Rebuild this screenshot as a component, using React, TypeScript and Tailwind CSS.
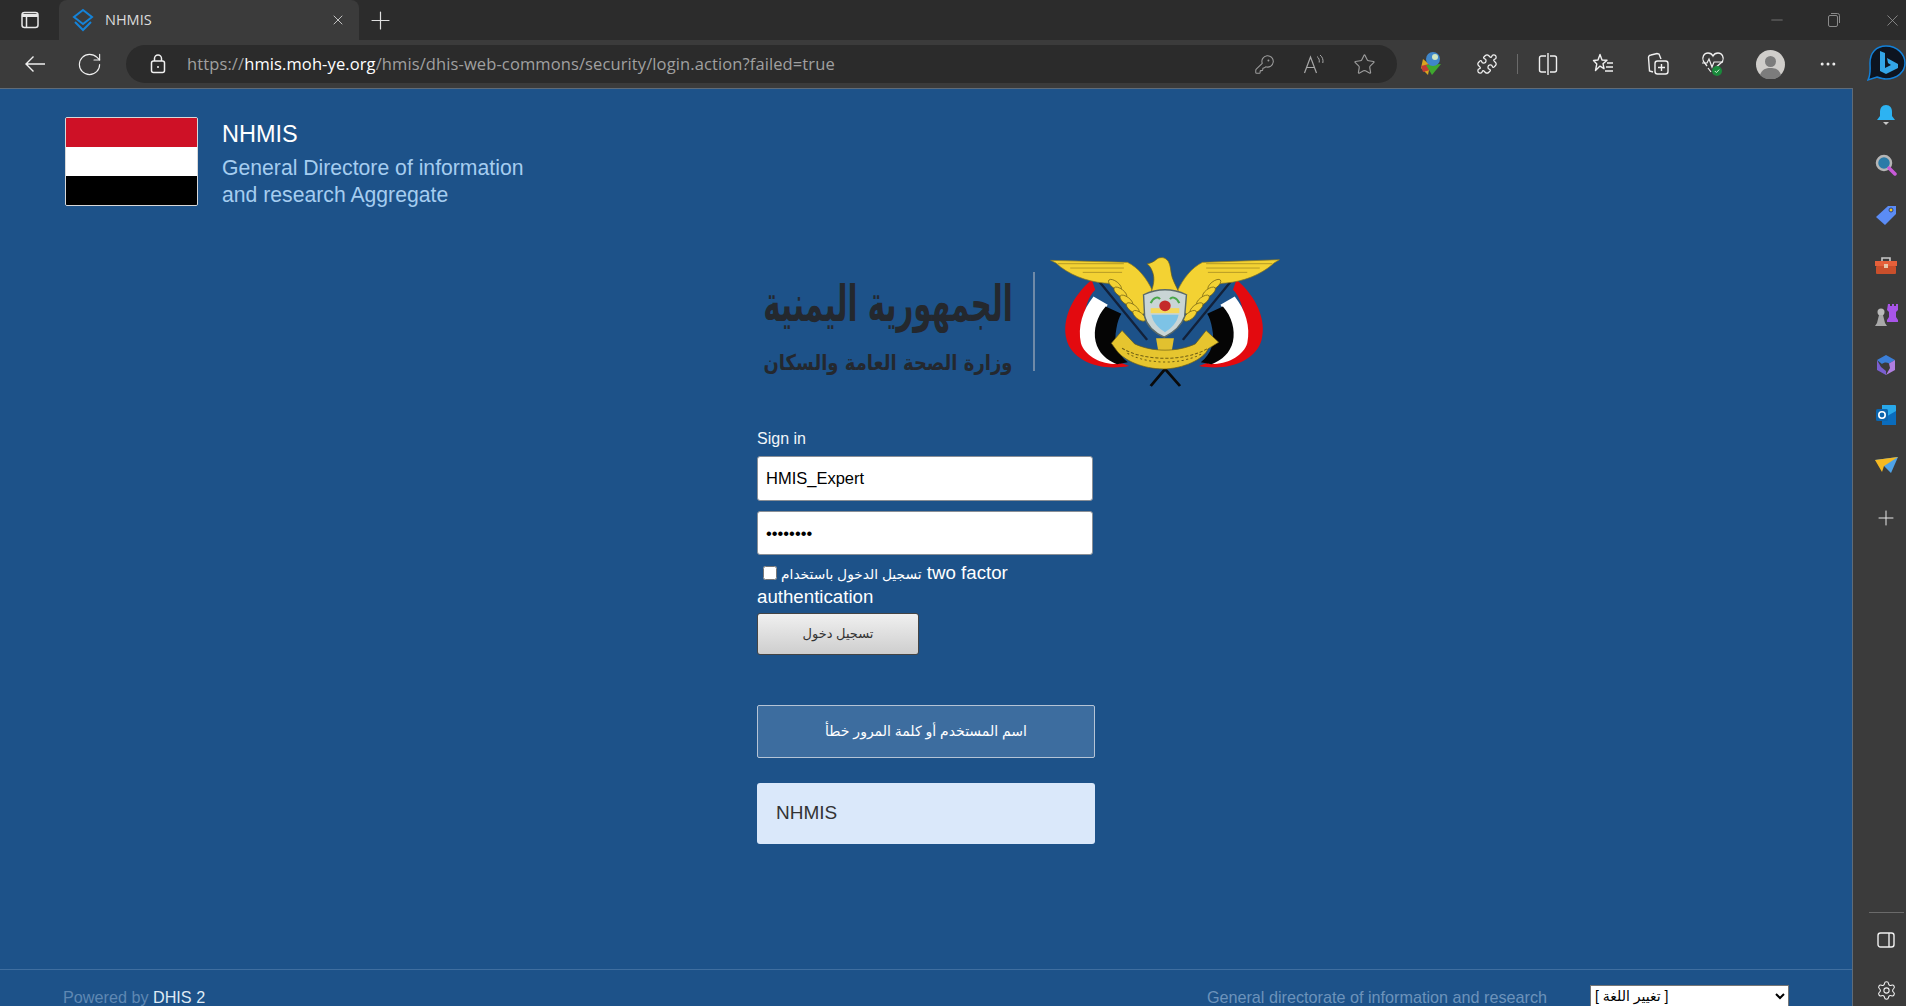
import React from 'react';
import { RotateCw, KeyRound, Star, Puzzle, Plus, X, Minus, Settings, MoreHorizontal } from 'lucide-react';

const arial = "font-['Liberation_Sans','DejaVu_Sans',sans-serif]";

function TabDiamonds() {
  return (
    <svg width="22" height="24" viewBox="0 0 22 24" fill="none" stroke="#1583d8" strokeWidth="2">
      <path d="M11 2 20 9 11 16 2 9Z" />
      <path d="M3 14 11 22 19 14" />
    </svg>
  );
}

function ToolbarBtn({ children, wide }: { children: React.ReactNode; wide?: boolean }) {
  return <div className={`flex h-full items-center justify-center ${wide ? 'w-[56px]' : 'w-[55px]'}`}>{children}</div>;
}

function TabStrip() {
  return (
    <div className="flex h-[40px] items-end bg-[#2c2c2c] text-[#d8d8d8]">
      <div className="flex h-full w-[59px] items-center justify-center">
        <svg width="20" height="20" viewBox="0 0 20 20" fill="none" stroke="#e8e8e8" strokeWidth="1.5">
          <rect x="2" y="2.5" width="16" height="15" rx="2.5" />
          <path d="M2 5.500h16" strokeWidth="3" />
          <path d="M6.500 6v11" />
        </svg>
      </div>
      <div className="flex h-full w-[300px] items-center rounded-t-lg bg-[#3b3b3b] pl-[13px] pr-[13px]">
        <TabDiamonds />
        <span className="ml-[11px] font-['Open_Sans',sans-serif] text-[14.5px] text-[#dcdcdc]">NHMIS</span>
        <X className="ml-auto" size={16} strokeWidth={1.3} />
      </div>
      <div className="flex h-full w-[42px] items-center justify-center">
        <Plus size={29} strokeWidth={1} color="#e0e0e0" />
      </div>
      <div className="ml-auto flex h-full">
        <div className="flex w-[57px] items-center justify-center"><Minus size={18} strokeWidth={1} color="#8a8a8a" /></div>
        <div className="flex w-[57px] items-center justify-center">
          <svg width="14" height="16" viewBox="0 0 14 16" fill="none" stroke="#8a8a8a">
            <rect x="1.500" y="3.500" width="9" height="11" rx="1.500" />
            <path d="M4 1.500h6.500a2 2 0 0 1 2 2V11" />
          </svg>
        </div>
        <div className="flex w-[44px] items-center pl-[21px]"><X size={19} strokeWidth={1} color="#9a9a9a" /></div>
      </div>
    </div>
  );
}

function AddressBar() {
  return (
    <div className="ml-[9px] flex h-[38px] w-[1271px] items-center rounded-full bg-[#2b2b2b] pl-[24px] pr-[8px]">
      <svg width="16" height="20" viewBox="0 0 16 20" fill="none" stroke="#f0f0f0" strokeWidth="1.500">
        <rect x="1.500" y="7" width="13" height="11.500" rx="2" />
        <path d="M4.500 7V4.500a3.500 3.500 0 0 1 7 0V7" />
        <circle cx="8" cy="13" r="1" fill="#f0f0f0" stroke="none" />
      </svg>
      <div className="ml-[21px] font-['Open_Sans',sans-serif] text-[16.5px] tracking-[0.11px] text-[#a0a0a0] whitespace-nowrap">
        https://<span className="text-white">hmis.moh-ye.org</span>/hmis/dhis-web-commons/security/login.action?failed=true
      </div>
      <div className="ml-auto flex h-full text-[#9c9c9c]">
        <div className="flex w-[50px] items-center justify-center"><KeyRound size={21} strokeWidth={1.2} /></div>
        <div className="flex w-[50px] items-center justify-center">
          <svg width="22" height="20" viewBox="0 0 22 20" fill="none" stroke="#a8a8a8" strokeWidth="1.2">
            <path d="M1.500 19 7.500 3l6 16M3.800 13.500h7.400" />
            <path d="M14 2.500c2 1.500 2.600 3.500 2.200 6M17 1c2.600 2 3.500 5 2.800 8" strokeWidth="1" />
          </svg>
        </div>
        <div className="flex w-[50px] items-center justify-center"><Star size={23} strokeWidth={1.2} /></div>
      </div>
    </div>
  );
}

function Toolbar() {
  return (
    <div className="flex h-[48px] items-center bg-[#3b3b3b] pl-[7px] text-[#f0f0f0]">
      <ToolbarBtn>
        <svg width="22" height="18" viewBox="0 0 22 18" fill="none" stroke="#f0f0f0" strokeWidth="1.400">
          <path d="M21 9H2M9.500 1.500 2 9l7.500 7.500" />
        </svg>
      </ToolbarBtn>
      <ToolbarBtn><RotateCw size={27} strokeWidth={1} /></ToolbarBtn>
      <AddressBar />
      <div className="ml-[6px] flex h-full items-center">
        <ToolbarBtn wide>
          <svg width="22" height="26" viewBox="0 0 22 26">
            <path d="M3 8 10 14 8 24 1 17Z" fill="#d9a520" />
            <path d="M1 15 9 13 10 19 3 21Z" fill="#c23b32" />
            <path d="M6 14 21 13 12 24Z" fill="#3fa82f" />
            <circle cx="13" cy="8" r="7" fill="#3f86c9" />
            <circle cx="15" cy="6" r="3" fill="#cfe6c3" />
          </svg>
        </ToolbarBtn>
        <ToolbarBtn wide><Puzzle size={22} strokeWidth={1.4} /></ToolbarBtn>
        <div className="mx-[2px] h-[20px] w-px bg-[#6a6a6a]" />
        <ToolbarBtn>
          <svg width="20" height="22" viewBox="0 0 20 22" fill="none" stroke="#f0f0f0" strokeWidth="1.400">
            <path d="M8 3H3.500A2 2 0 0 0 1.500 5v12a2 2 0 0 0 2 2H8M12 3h4.500a2 2 0 0 1 2 2v12a2 2 0 0 1-2 2H12M10 0v22" />
          </svg>
        </ToolbarBtn>
        <ToolbarBtn>
          <svg width="22" height="22" viewBox="0 0 22 22" fill="none" stroke="#f0f0f0" strokeWidth="1.400">
            <path d="M8 1.500 10 7l5 .3-4 3.400 1 5-4-2.600-4.500 4.400 1.300-6.600L1.500 7.500 6 7Z" strokeLinejoin="round" />
            <path d="M15 10h6M14 14h7M13 18h8" />
          </svg>
        </ToolbarBtn>
        <ToolbarBtn>
          <svg width="22" height="24" viewBox="0 0 22 24" fill="none" stroke="#f0f0f0" strokeWidth="1.400">
            <rect x="8" y="9" width="13" height="13" rx="2.500" />
            <path d="M14.500 12v7M11 15.500h7" />
            <path d="M6 20 2.500 19 1.500 5.500A2.500 2.500 0 0 1 4 3l6-1.500 2 .5 2 5" />
          </svg>
        </ToolbarBtn>
        <ToolbarBtn>
          <svg width="24" height="26" viewBox="0 0 24 26" fill="none">
            <path d="M6 15 2.500 10.500C.5 6 3 2 7 2c2.500 0 4 1 5 3 1-2 2.500-3 5-3 4 0 6.500 4 4.500 8.500L13 18" stroke="#f0f0f0" strokeWidth="1.300" />
            <path d="M1 12h5l2-4 3 8 2-5h9" stroke="#f0f0f0" strokeWidth="1.200" />
            <path d="M7 17l3 4" stroke="#f0f0f0" strokeWidth="1.200" />
            <circle cx="16" cy="20" r="5" fill="#1a8a3c" />
            <path d="M13.800 20l1.600 1.600 2.800-3" stroke="#cdeed4" strokeWidth="1" />
          </svg>
        </ToolbarBtn>
        <div className="ml-[3px] h-full">
          <ToolbarBtn>
            <svg width="29" height="29" viewBox="0 0 29 29">
              <circle cx="14.500" cy="14.500" r="14.500" fill="#cfcdca" />
              <circle cx="14.500" cy="11.500" r="5.500" fill="#7c7c7c" />
              <path d="M4 25c2-6 6-7 10.500-7S23 19 25 25a14.500 14.500 0 0 1-21 0Z" fill="#7c7c7c" />
            </svg>
          </ToolbarBtn>
        </div>
        <div className="ml-[2px] h-full">
          <ToolbarBtn><MoreHorizontal size={20} strokeWidth={1.6} /></ToolbarBtn>
        </div>
      </div>
      <div className="ml-auto flex items-center">
        <svg width="39" height="38" viewBox="0 0 39 38">
          <path d="M19 1C9 1 3 8 3 18c0 6 1 11-2 17l9-3c3 1 6 2 9 2 11 0 19-7 19-16S30 1 19 1Z" fill="#0d1420" stroke="#1380d8" strokeWidth="1.500" />
          <path d="M13 6l5 2v15l6-3-3-2-1-5 11 6v4l-12 6-6-3Z" fill="#33a6e8" />
        </svg>
      </div>
    </div>
  );
}

function Emblem() {
  const feathers = [
    [1050, 135], [1065, 158], [1082, 182], [1100, 205], [1118, 228],
    [1328, 135], [1313, 158], [1296, 182], [1278, 205], [1260, 228],
  ];
  return (
    <svg className="h-[137px] w-[236px] shrink-0" viewBox="860 40 660 410" preserveAspectRatio="none">
      <path d="M985 120C930 170 900 240 915 300c15 60 90 95 175 78l-20-8c-50-5-100-40-105-110-3-50 10-90 30-110Z" fill="#e30a0f" />
      <path d="M990 170c-30 40-45 90-35 140 10 35 50 60 90 62l20-2c-40-20-60-60-55-110 2-30 10-50 20-65Z" fill="#fff" />
      <path d="M1024 200c-25 30-35 70-28 105 8 35 30 55 60 68l30-6c-30-25-40-60-32-100 3-20 8-35 14-45Z" fill="#050505" />
      <path d="M1390 120c55 50 85 120 70 180-15 60-90 95-175 78l20-8c50-5 100-40 105-110 3-50-10-90-30-110Z" fill="#e30a0f" />
      <path d="M1385 170c30 40 45 90 35 140-10 35-50 60-90 62l-20-2c40-20 60-60 55-110-2-30-10-50-20-65Z" fill="#fff" />
      <path d="M1352 200c25 30 35 70 28 105-8 35-30 55-60 68l-30-6c30-25 40-60 32-100-3-20-8-35-14-45Z" fill="#050505" />
      <path d="M985 98 1140 300M1395 98 1240 300" stroke="#12213a" strokeWidth="7" />
      <path d="M1200 375 1150 438M1180 375 1232 438" stroke="#0a0a0a" strokeWidth="8" />
      <path d="M870 62 1085 68c30 15 55 50 70 85l-10 60-25 15-60-90c-15-5-30-8-40-8-50-5-100-25-135-60Z" fill="#f3d233" stroke="#8f7a1c" strokeWidth="2" />
      <path d="M1510 60 1295 68c-30 15-55 50-70 85l10 60 25 15 60-90c15-5 30-8 40-8 50-5 100-25 135-60Z" fill="#f3d233" stroke="#8f7a1c" strokeWidth="2" />
      {feathers.map(([x, y]) => (
        <ellipse key={`${x}-${y}`} cx={x} cy={y} rx="22" ry="10" fill="#f3d233" stroke="#6f5f15" strokeWidth="2" transform={`rotate(${x < 1190 ? 40 : -40} ${x} ${y})`} />
      ))}
      <path d="M890 72h185M925 85h150M960 98h110M1490 72h-185M1455 85h-150M1420 98h-110" stroke="#9b8420" strokeWidth="2" />
      <path d="M1140 72c12-2 18-6 25-12 8-8 20-8 28-2 10 8 12 22 14 40 2 20 14 40 22 60h-78c6-20 12-40 4-62-3-8-5-14-15-24Z" fill="#f3d233" stroke="#6f5f15" strokeWidth="2" />
      <path d="M1130 165c40-20 80-20 120 0l-5 65c-10 30-35 50-57 62-25-12-48-32-55-62Z" fill="#c9d5d5" stroke="#5a6a6a" strokeWidth="4" />
      <path d="M1150 205h80v15h-80Z" fill="#f4d85c" />
      <path d="M1152 225h76c-5 25-20 40-38 52-18-12-33-27-38-52Z" fill="#7dc3e6" />
      <circle cx="1190" cy="198" r="16" fill="#c42a2a" />
      <path d="M1150 190c8-18 20-20 26-12M1230 190c-8-18-20-20-26-12" stroke="#4aa84a" strokeWidth="6" fill="none" />
      <path d="M1165 295h50l-8 50h-34Z" fill="#e2c12f" />
      <path d="M1040 310 1070 272l35 40c50 25 120 25 170 0l30-40 35 35-30 20c-10 30-70 60-125 60-55 0-110-25-130-55Z" fill="#e6c52f" stroke="#6f5f15" strokeWidth="2" />
      <path d="M1070 325c60 40 180 40 240 0" stroke="#6f5f15" strokeWidth="3" fill="none" strokeDasharray="9 5" />
      <path d="M1085 340c55 35 155 35 210 0" stroke="#6f5f15" strokeWidth="3" fill="none" strokeDasharray="6 7" />
    </svg>
  );
}

function LogoBlock() {
  return (
    <div className="ml-[6px] flex h-[137px] w-[524px] items-center">
      <div dir="rtl" className="flex w-[250px] shrink-0 flex-col items-center font-['DejaVu_Sans',sans-serif] text-[#24282e] whitespace-nowrap">
        <div className="scale-y-[1.7] text-[29.3px] font-bold leading-[70px]">الجمهورية اليمنية</div>
        <div className="mt-[12px] scale-y-[1.2] text-[18px] font-bold leading-[24px]">وزارة الصحة العامة والسكان</div>
      </div>
      <div className="ml-[20px] mr-[12px] h-[99px] w-[2px] shrink-0 bg-[#6f8aa8]" />
      <Emblem />
    </div>
  );
}

function LoginForm() {
  return (
    <div className={`mx-auto w-[338px] ${arial}`}>
      <LogoBlock />
      <div className="mt-[40px] text-[16px] leading-[18px] text-[#f2f6fa]">Sign in</div>
      <input
        type="text"
        value="HMIS_Expert"
        readOnly
        className="mt-[8px] block h-[45px] w-[336px] rounded-[3px] border border-[#8a8f96] bg-white px-[8px] text-[16.5px] text-black"
      />
      <input
        type="password"
        value="12345678"
        readOnly
        className="mt-[10px] block h-[44px] w-[336px] rounded-[3px] border border-[#8a8f96] bg-white px-[8px] text-[16.5px] text-black"
      />
      <label className="mt-[6px] block w-[270px] text-[18.7px] leading-[24px] text-white">
        <input type="checkbox" className="ml-[6px] mr-[4px] inline-block h-[14px] w-[14px] align-[-1px]" />
        <span className="text-[13.8px] leading-[14px]" dir="rtl">تسجيل الدخول باستخدام</span> two factor authentication
      </label>
      <button className="mt-[4px] flex h-[42px] w-[162px] items-center justify-center rounded-[3px] border border-[#444] bg-linear-to-b from-[#f0f0f0] to-[#cecece] text-[13px] text-[#333]">
        تسجيل دخول
      </button>
      <div dir="rtl" className="mt-[50px] flex h-[53px] items-center justify-center rounded-[2px] border border-[#b5c4d6] bg-[#3d6d9f] text-[14px] text-white">
        اسم المستخدم أو كلمة المرور خطأ
      </div>
      <div className="mt-[25px] flex h-[61px] items-center rounded-[3px] bg-[#dae8fa] pl-[19px] text-[19px] text-[#333]">NHMIS</div>
    </div>
  );
}

function Footer() {
  return (
    <div className={`mt-auto flex h-[37px] shrink-0 items-start border-t border-[#3f6e9f] pl-[63px] pr-[63px] text-[16.2px] ${arial}`}>
      <div className="mt-[17px] leading-[20px] text-[#5f88b3]">
        Powered by <span className="text-[#dfeaf5]">DHIS 2</span>
      </div>
      <div className="ml-auto mt-[17px] leading-[20px] text-[#6c93bb]">General directorate of information and research</div>
      <select className="ml-[43px] mt-[15px] h-[22px] w-[199px] border border-[#767676] bg-white text-[14px] text-black">
        <option>[ تغيير اللغة ]</option>
      </select>
    </div>
  );
}

function Main() {
  return (
    <main className="flex min-w-0 flex-1 flex-col overflow-hidden border-t border-r border-[#5f6b78] bg-[#1d5289]">
      <div className={`flex h-[117px] shrink-0 pl-[65px] pt-[28px] ${arial}`}>
        <div className="flex h-[89px] w-[133px] flex-col overflow-hidden rounded-[2px] border border-[#d8d8d8]">
          <div className="flex-1 bg-[#ce1126]" />
          <div className="flex-1 bg-white" />
          <div className="flex-1 bg-black" />
        </div>
        <div className="ml-[24px]">
          <div className="text-[23.5px] leading-[34px] text-white">NHMIS</div>
          <div className="mt-[3px] w-[330px] text-[21.2px] leading-[27px] text-[#a5cdf0]">General Directore of information and research Aggregate</div>
        </div>
      </div>
      <div className="mt-[47px] shrink-0">
        <LoginForm />
      </div>
      <Footer />
    </main>
  );
}

function SideItem({ children }: { children: React.ReactNode }) {
  return <div className="flex h-[50px] shrink-0 items-center justify-center">{children}</div>;
}

function Sidebar() {
  return (
    <aside className="flex w-[53px] shrink-0 flex-col overflow-hidden bg-[#3b3b3b] pl-[13px] pt-[2px]">
      <SideItem>
        <svg width="20" height="22" viewBox="0 0 20 22">
          <path d="M10 1c4 0 6 3 6 7v4l3 4H1l3-4V8c0-4 2-7 6-7Z" fill="#2db3f2" />
          <path d="M7 18h6l-3 3Z" fill="#c9c9c9" />
        </svg>
      </SideItem>
      <SideItem>
        <svg width="22" height="22" viewBox="0 0 22 22">
          <circle cx="9" cy="9" r="7" fill="#2a7ba8" stroke="#b5b5b5" strokeWidth="2.500" />
          <path d="M14 14l6 6" stroke="#c85ad8" strokeWidth="3.500" strokeLinecap="round" />
        </svg>
      </SideItem>
      <SideItem>
        <svg width="22" height="21" viewBox="0 0 22 21">
          <path d="M13 1h8v8L10 20 1 12Z" fill="#5b8cf5" />
          <circle cx="16" cy="5" r="2" fill="#f2c81c" stroke="#27408a" />
        </svg>
      </SideItem>
      <SideItem>
        <svg width="24" height="19" viewBox="0 0 24 19">
          <path d="M8 5V2h8v3" fill="none" stroke="#c9c9c9" strokeWidth="1.600" />
          <rect x="1" y="5" width="22" height="5" fill="#e5603a" />
          <rect x="2" y="10" width="20" height="8" rx="1" fill="#c94f2b" />
          <rect x="10" y="8" width="4" height="4" fill="#e6c5a8" />
        </svg>
      </SideItem>
      <SideItem>
        <svg width="24" height="24" viewBox="0 0 24 24">
          <path d="M14 1h2v2h2V1h2v2h2V1h2v6l-2 2v5l2 3v2H13v-2l2-3V9l-2-2Z" fill="#a855e8" />
          <circle cx="7" cy="9" r="3.500" fill="#b9b9b9" />
          <path d="M5 12h4l2 8 2 3H1l2-3Z" fill="#a8a8a8" />
        </svg>
      </SideItem>
      <SideItem>
        <svg width="22" height="22" viewBox="0 0 22 22">
          <path d="M11 1 20 6 14 9.500C12 8 9 8 7 10L2 6Z" fill="#3b7fd8" />
          <path d="M20 6v10l-9 5 4-7-1-4.500Z" fill="#b07fe0" />
          <path d="M2 6v10l9 5v-4L6 13Z" fill="#7a5fd0" />
        </svg>
      </SideItem>
      <SideItem>
        <svg width="22" height="22" viewBox="0 0 22 22">
          <path d="M7 1h13a1 1 0 0 1 1 1v18a1 1 0 0 1-1 1H7Z" fill="#28a8ea" />
          <path d="M14 11 21 7v14H7v-5Z" fill="#0a6cbd" />
          <rect x="1" y="5" width="12" height="12" rx="1.500" fill="#0a64ad" />
          <circle cx="7" cy="11" r="3.200" fill="none" stroke="#fff" strokeWidth="1.600" />
        </svg>
      </SideItem>
      <SideItem>
        <svg width="23" height="17" viewBox="0 0 23 17">
          <path d="M0 3 23 0 16 16 9 9Z" fill="#4fa3e8" />
          <path d="M0 3 23 0 9 9 7 15Z" fill="#f5b922" />
        </svg>
      </SideItem>
      <div className="mt-[3px]">
        <SideItem><Plus size={24} strokeWidth={1} color="#e8e8e8" /></SideItem>
      </div>
      <div className="mb-[2px] mt-[369px] h-px w-[35px] shrink-0 self-center bg-[#6a6a6a]" />
      <SideItem>
        <svg width="18" height="18" viewBox="0 0 18 18" fill="none" stroke="#f0f0f0" strokeWidth="1.400">
          <rect x="1" y="2" width="16" height="14" rx="2.500" />
          <path d="M12 2v14" />
        </svg>
      </SideItem>
      <SideItem><Settings size={21} strokeWidth={1.2} color="#f0f0f0" /></SideItem>
    </aside>
  );
}

export default function App() {
  return (
    <div className="flex h-[1006px] w-full flex-col overflow-hidden bg-[#3b3b3b]">
      <TabStrip />
      <Toolbar />
      <div className="flex min-h-0 flex-1">
        <Main />
        <Sidebar />
      </div>
    </div>
  );
}
